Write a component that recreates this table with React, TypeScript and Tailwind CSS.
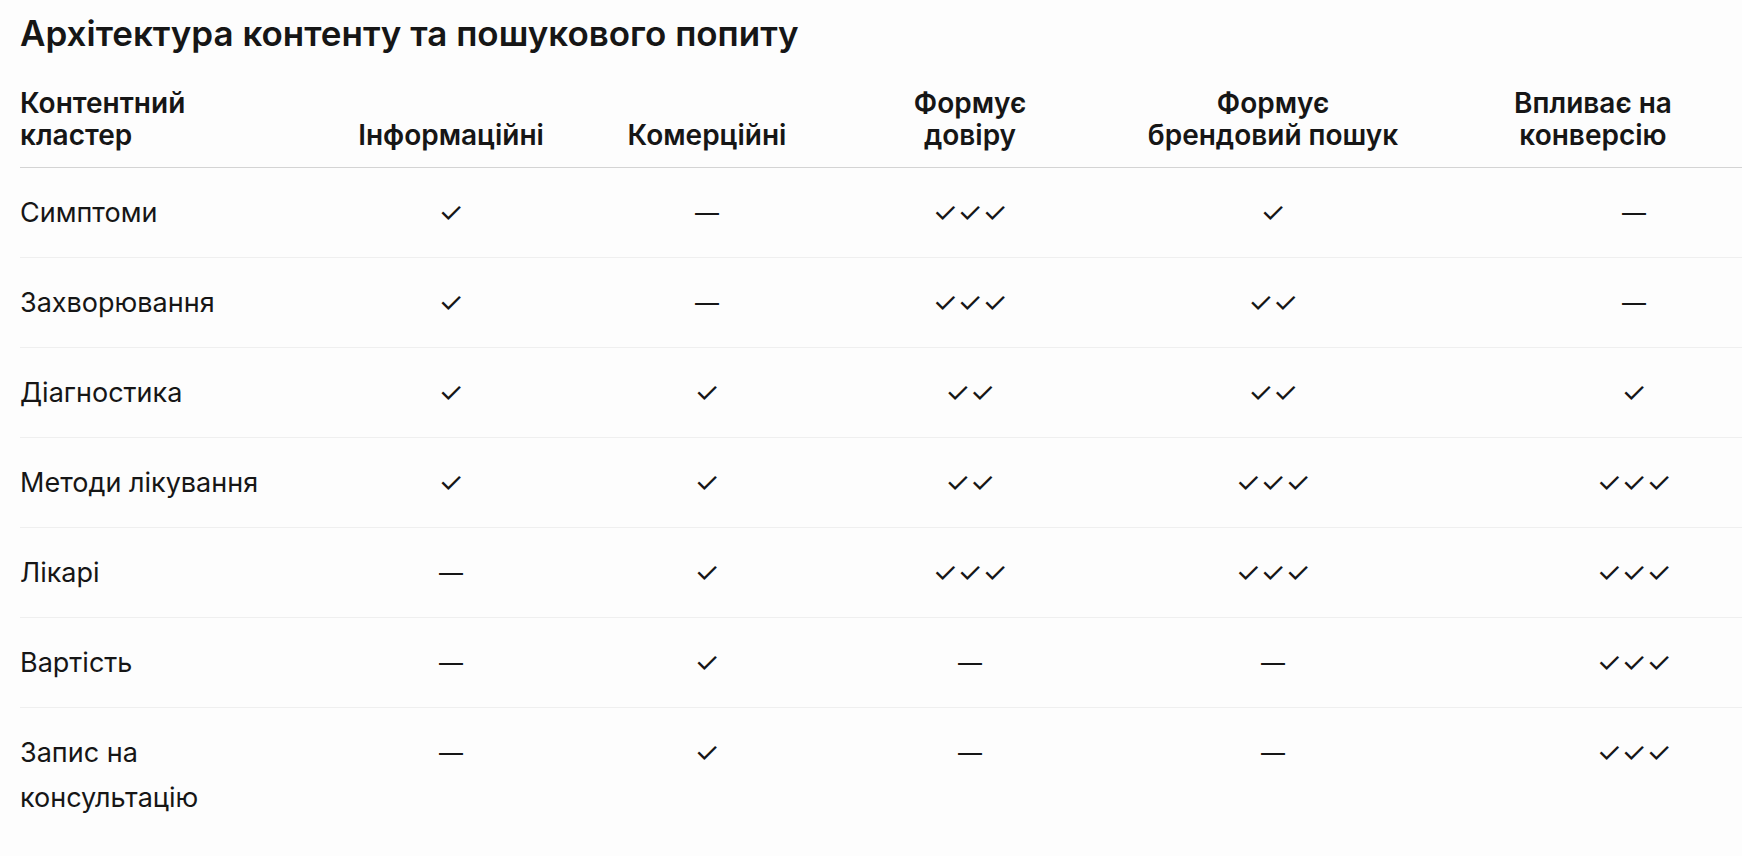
const rows = [
  { name: "Симптоми", cells: ["✓", "—", "✓✓✓", "✓", "—"] },
  { name: "Захворювання", cells: ["✓", "—", "✓✓✓", "✓✓", "—"] },
  { name: "Діагностика", cells: ["✓", "✓", "✓✓", "✓✓", "✓"] },
  { name: "Методи лікування", cells: ["✓", "✓", "✓✓", "✓✓✓", "✓✓✓"] },
  { name: "Лікарі", cells: ["—", "✓", "✓✓✓", "✓✓✓", "✓✓✓"] },
  { name: "Вартість", cells: ["—", "✓", "—", "—", "✓✓✓"] },
  { name: "Запис на консультацію", cells: ["—", "✓", "—", "—", "✓✓✓"] },
];

const App = () => {
  return (
    <div className="min-h-screen w-full overflow-hidden bg-[#fdfdfd] text-[#161616] font-['Inter','Liberation_Sans',sans-serif]">
      <div className="pl-5 pt-3">
        <h1 className="text-[35px] leading-[42px] font-semibold">
          Архітектура контенту та пошукового попиту
        </h1>

        <div className="mt-[33px] grid w-max grid-cols-[303px_256px_256px_270px_336px_386px] text-[27px]">
          <div className="flex items-end pb-4 border-b border-[#d4d4d4] text-[28px] font-semibold leading-8">
            <span>
              Контентний
              <br />
              кластер
            </span>
          </div>
          <div className="flex items-end justify-center pb-4 border-b border-[#d4d4d4] text-[28px] font-semibold leading-8">
            Інформаційні
          </div>
          <div className="flex items-end justify-center pb-4 border-b border-[#d4d4d4] text-[28px] font-semibold leading-8">
            Комерційні
          </div>
          <div className="flex items-end justify-center pb-4 border-b border-[#d4d4d4] text-[28px] font-semibold leading-8 text-center">
            <span>
              Формує
              <br />
              довіру
            </span>
          </div>
          <div className="flex items-end justify-center pb-4 border-b border-[#d4d4d4] text-[28px] font-semibold leading-8 text-center">
            <span>
              Формує
              <br />
              брендовий пошук
            </span>
          </div>
          <div className="flex items-end pb-4 pl-4 border-b border-[#d4d4d4] text-[28px] font-semibold leading-8 text-center">
            <span className="w-[272px]">
              Впливає на
              <br />
              конверсію
            </span>
          </div>

          {rows.map((row, i) => {
            const last = i === rows.length - 1;
            const line = last ? "" : "border-b border-[#efefef]";
            return (
              <div key={row.name} className="contents">
                <div className={`py-[22px] leading-[45px] ${line}`}>
                  {last ? (
                    <>
                      Запис на
                      <br />
                      консультацію
                    </>
                  ) : (
                    row.name
                  )}
                </div>
                {row.cells.map((c, j) => (
                  <div
                    key={j}
                    className={`py-[22px] leading-[45px] text-center ${c === "—" ? "text-[24px]" : "text-[28px]"} ${line}`}
                  >
                    {c}
                  </div>
                ))}
              </div>
            );
          })}
        </div>
      </div>
    </div>
  );
};

export default App;
